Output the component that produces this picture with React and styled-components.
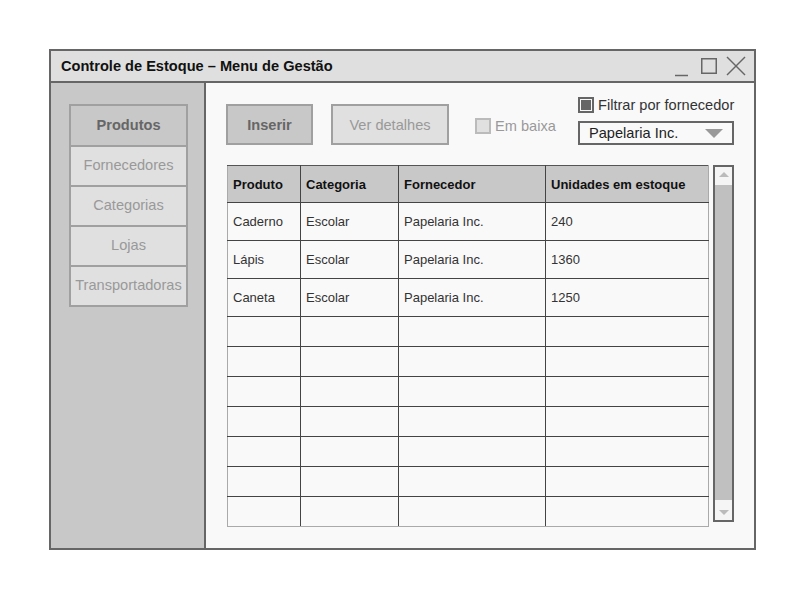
import React from "react";
import styled, { createGlobalStyle } from "styled-components";

const GlobalStyle = createGlobalStyle`
  body {
    margin: 0;
    padding: 49px;
    background: #ffffff;
    font-family: "Liberation Sans", Arial, sans-serif;
  }
  * {
    box-sizing: border-box;
  }
`;

const menuItems = ["Produtos", "Fornecedores", "Categorias", "Lojas", "Transportadoras"];

const rows = [
  { produto: "Caderno", categoria: "Escolar", fornecedor: "Papelaria Inc.", unidades: "240" },
  { produto: "Lápis", categoria: "Escolar", fornecedor: "Papelaria Inc.", unidades: "1360" },
  { produto: "Caneta", categoria: "Escolar", fornecedor: "Papelaria Inc.", unidades: "1250" },
];

const emptyRows = 7;

const App = () => {
  return (
    <>
      <GlobalStyle />
      <Window>
        <TitleBar>
          <Title>Controle de Estoque – Menu de Gestão</Title>
          <WindowControls width="72" height="30" viewBox="0 0 72 30">
            <line x1="1" y1="24.5" x2="14" y2="24.5" stroke="#666" strokeWidth="1.5" />
            <rect x="27.75" y="7.75" width="14.5" height="14.5" fill="none" stroke="#666" strokeWidth="1.5" />
            <line x1="53" y1="6" x2="71" y2="24" stroke="#666" strokeWidth="1.5" />
            <line x1="71" y1="6" x2="53" y2="24" stroke="#666" strokeWidth="1.5" />
          </WindowControls>
        </TitleBar>
        <Body>
          <Sidebar>
            <Menu>
              {menuItems.map((item, i) => (
                <MenuItem key={item} active={i === 0}>
                  {item}
                </MenuItem>
              ))}
            </Menu>
          </Sidebar>
          <Content>
            <Toolbar>
              <Button primary>Inserir</Button>
              <Button>Ver detalhes</Button>
              <CheckLabel>
                <CheckBox />
                Em baixa
              </CheckLabel>
              <Filter>
                <FilterLabel>
                  <CheckBox checked />
                  Filtrar por fornecedor
                </FilterLabel>
                <Select>
                  Papelaria Inc.
                  <Caret />
                </Select>
              </Filter>
            </Toolbar>
            <TableArea>
              <Table>
                <colgroup>
                  <col style={{ width: 73 }} />
                  <col style={{ width: 98 }} />
                  <col style={{ width: 147 }} />
                  <col />
                </colgroup>
                <thead>
                  <tr>
                    <Th>Produto</Th>
                    <Th>Categoria</Th>
                    <Th>Fornecedor</Th>
                    <Th>Unidades em estoque</Th>
                  </tr>
                </thead>
                <tbody>
                  {rows.map((r) => (
                    <Row key={r.produto} filled>
                      <Td>{r.produto}</Td>
                      <Td>{r.categoria}</Td>
                      <Td>{r.fornecedor}</Td>
                      <Td>{r.unidades}</Td>
                    </Row>
                  ))}
                  {Array.from({ length: emptyRows }).map((_, i) => (
                    <Row key={i}>
                      <Td />
                      <Td />
                      <Td />
                      <Td />
                    </Row>
                  ))}
                </tbody>
              </Table>
              <Scrollbar>
                <ScrollCap>
                  <Arrow up />
                </ScrollCap>
                <ScrollCap bottom>
                  <Arrow />
                </ScrollCap>
              </Scrollbar>
            </TableArea>
          </Content>
        </Body>
      </Window>
    </>
  );
};

const Window = styled.div`
  width: 707px;
  height: 501px;
  border: 2px solid #666;
  display: flex;
  flex-direction: column;
`;

const TitleBar = styled.div`
  height: 32px;
  flex-shrink: 0;
  background: #dfdfdf;
  border-bottom: 2px solid #666;
  display: flex;
  align-items: center;
  padding: 0 8px 0 10px;
`;

const Title = styled.span`
  font-size: 14.6px;
  font-weight: 700;
  color: #111;
`;

const WindowControls = styled.svg`
  margin-left: auto;
  display: block;
`;

const Body = styled.div`
  flex: 1;
  display: flex;
`;

const Sidebar = styled.div`
  width: 155px;
  background: #c8c8c8;
  border-right: 2px solid #666;
  padding: 21px 0 0 18px;
`;

const Menu = styled.div`
  width: 119px;
  border: 2px solid #a0a0a0;
  display: flex;
  flex-direction: column;
`;

const MenuItem = styled.div`
  height: ${(p) => (p.active ? "39px" : "40px")};
  display: flex;
  align-items: center;
  justify-content: center;
  font-size: 14.6px;
  background: ${(p) => (p.active ? "#c8c8c8" : "#e0e0e0")};
  color: ${(p) => (p.active ? "#666" : "#999")};
  font-weight: ${(p) => (p.active ? 700 : 400)};
  border-top: ${(p) => (p.active ? "none" : "2px solid #a0a0a0")};
  padding-bottom: 2px;
  white-space: nowrap;
`;

const Content = styled.div`
  flex: 1;
  background: #f9f9f9;
  padding: 14px 20px 0 20px;
  display: flex;
  flex-direction: column;
`;

const Toolbar = styled.div`
  height: 48px;
  display: flex;
  align-items: flex-end;
`;

const Button = styled.div`
  height: 41px;
  width: ${(p) => (p.primary ? "87px" : "118px")};
  margin-left: ${(p) => (p.primary ? "0" : "18px")};
  border: 2px solid #a0a0a0;
  background: ${(p) => (p.primary ? "#c8c8c8" : "#e0e0e0")};
  color: ${(p) => (p.primary ? "#666" : "#999")};
  font-weight: ${(p) => (p.primary ? 700 : 400)};
  font-size: 14.6px;
  display: flex;
  align-items: center;
  justify-content: center;
`;

const CheckLabel = styled.div`
  margin-left: 26px;
  margin-bottom: 11px;
  display: flex;
  align-items: center;
  gap: 4px;
  font-size: 14.6px;
  color: #999;
`;

const CheckBox = styled.span`
  width: 16px;
  height: 16px;
  flex-shrink: 0;
  border: 2px solid ${(p) => (p.checked ? "#666" : "#bbb")};
  background: ${(p) => (p.checked ? "#666" : "#e0e0e0")};
  box-shadow: ${(p) => (p.checked ? "inset 0 0 0 1px #f9f9f9" : "none")};
  display: inline-block;
`;

const Filter = styled.div`
  margin-left: auto;
  width: 156px;
  display: flex;
  flex-direction: column;
  gap: 8px;
`;

const FilterLabel = styled.div`
  display: flex;
  align-items: center;
  gap: 4px;
  font-size: 14.6px;
  color: #333;
  white-space: nowrap;
`;

const Select = styled.div`
  height: 24px;
  border: 2px solid #666;
  background: #f9f9f9;
  display: flex;
  align-items: center;
  padding: 0 9px;
  font-size: 14.6px;
  color: #222;
`;

const Caret = styled.span`
  margin-left: auto;
  width: 0;
  height: 0;
  border-left: 9px solid transparent;
  border-right: 9px solid transparent;
  border-top: 9px solid #999;
`;

const TableArea = styled.div`
  margin-top: 20px;
  padding-left: 1px;
  display: flex;
  align-items: flex-start;
  gap: 4px;
`;

const Table = styled.table`
  width: 482px;
  table-layout: fixed;
  border-collapse: collapse;
  font-size: 13px;
  border: 1px solid #aaa;
  border-top: 1px solid #555;
`;

const Th = styled.th`
  height: 37px;
  background: #c8c8c8;
  color: #111;
  text-align: left;
  font-weight: 700;
  padding: 0 5px;
  border-right: 1px solid #444;
  border-bottom: 1px solid #444;
  &:last-child {
    border-right: 1px solid #aaa;
  }
`;

const Row = styled.tr`
  height: ${(p) => (p.filled ? "38px" : "30px")};
  &:last-child td {
    border-bottom: 1px solid #aaa;
  }
`;

const Td = styled.td`
  padding: 0 5px;
  color: #333;
  border-right: 1px solid #444;
  border-bottom: 1px solid #444;
  &:last-child {
    border-right: 1px solid #aaa;
  }
`;

const Scrollbar = styled.div`
  width: 21px;
  height: 357px;
  border: 2px solid #666;
  background: #c0c0c0;
  display: flex;
  flex-direction: column;
  justify-content: space-between;
`;

const ScrollCap = styled.div`
  height: ${(p) => (p.bottom ? "20px" : "18px")};
  background: #f5f5f5;
  display: flex;
  justify-content: center;
  align-items: ${(p) => (p.bottom ? "flex-end" : "flex-start")};
  padding: ${(p) => (p.bottom ? "0 0 5px" : "5px 0 0")};
`;

const Arrow = styled.span`
  width: 0;
  height: 0;
  border-left: 5px solid transparent;
  border-right: 5px solid transparent;
  ${(p) => (p.up ? "border-bottom: 5px solid #bbb;" : "border-top: 5px solid #bbb;")}
`;

export default App;
